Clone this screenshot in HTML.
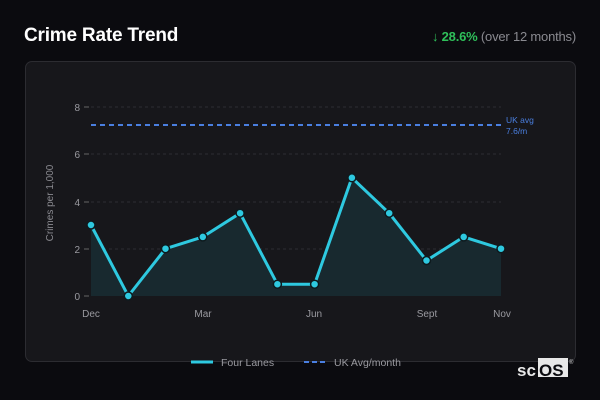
<!DOCTYPE html>
<html><head><meta charset="utf-8"><style>
html,body{margin:0;padding:0;background:#0b0b0f;width:600px;height:400px;overflow:hidden;font-family:"Liberation Sans","DejaVu Sans",sans-serif}
.t{position:absolute;left:24px;top:25px;color:#fff;font-weight:bold;font-size:19px;letter-spacing:-0.2px}
.s{position:absolute;right:24px;top:29px;font-size:13px;color:#8a8a90;letter-spacing:-0.2px}
.s b{color:#2fbf5a}
.card{position:absolute;left:25px;top:61px;width:549px;height:299px;background:#17171b;border:1px solid #2c2c31;border-radius:7px}
</style></head><body>
<div class="t">Crime Rate Trend</div>
<div class="s"><b>↓ 28.6%</b> (over 12 months)</div>
<div class="card"></div>
<svg width="600" height="400" style="position:absolute;left:0;top:0" font-family="Liberation Sans, sans-serif">
<g stroke="#2e2e33" stroke-dasharray="3,3" stroke-width="1">
<line x1="91" y1="107" x2="501" y2="107"/><line x1="91" y1="154" x2="501" y2="154"/><line x1="91" y1="202" x2="501" y2="202"/><line x1="91" y1="249" x2="501" y2="249"/>
</g>
<g stroke="#666" stroke-width="1"><line x1="84" y1="107" x2="89" y2="107"/><line x1="84" y1="154" x2="89" y2="154"/><line x1="84" y1="202" x2="89" y2="202"/><line x1="84" y1="249" x2="89" y2="249"/><line x1="84" y1="296" x2="89" y2="296"/></g>
<g fill="#9a9aa0" font-size="10" text-anchor="end"><text x="80" y="111">8</text><text x="80" y="158">6</text><text x="80" y="206">4</text><text x="80" y="253">2</text><text x="80" y="300">0</text></g>
<text transform="translate(53,203) rotate(-90)" fill="#8a8a90" font-size="10" text-anchor="middle">Crimes per 1,000</text>
<polygon fill="#18292f" points="91,296 91,225 128.3,296 165.5,248.7 202.8,236.9 240.1,213.2 277.4,284.2 314.6,284.2 351.9,177.8 389.2,213.2 426.5,260.5 463.7,236.9 501,248.7 501,296"/>
<line x1="91" y1="125" x2="501" y2="125" stroke="#4a7fe0" stroke-width="2" stroke-dasharray="5,4"/>
<text x="506" y="123" fill="#4a7fe0" font-size="8.5">UK avg</text><text x="506" y="134" fill="#4a7fe0" font-size="8.5">7.6/m</text>
<polyline fill="none" stroke="#2ec9e0" stroke-width="3" stroke-linejoin="round" points="91,225 128.3,296 165.5,248.7 202.8,236.9 240.1,213.2 277.4,284.2 314.6,284.2 351.9,177.8 389.2,213.2 426.5,260.5 463.7,236.9 501,248.7"/>
<g fill="#2ec9e0" stroke="#0e1a1e" stroke-width="1.5">
<circle cx="91" cy="225" r="4"/><circle cx="128.3" cy="296" r="4"/><circle cx="165.5" cy="248.7" r="4"/><circle cx="202.8" cy="236.9" r="4"/><circle cx="240.1" cy="213.2" r="4"/><circle cx="277.4" cy="284.2" r="4"/><circle cx="314.6" cy="284.2" r="4"/><circle cx="351.9" cy="177.8" r="4"/><circle cx="389.2" cy="213.2" r="4"/><circle cx="426.5" cy="260.5" r="4"/><circle cx="463.7" cy="236.9" r="4"/><circle cx="501" cy="248.7" r="4"/>
</g>
<g fill="#9a9aa0" font-size="10" text-anchor="middle"><text x="91" y="317">Dec</text><text x="203" y="317">Mar</text><text x="314" y="317">Jun</text><text x="427" y="317">Sept</text><text x="502" y="317">Nov</text></g>
<line x1="191" y1="362" x2="213" y2="362" stroke="#2ec9e0" stroke-width="3"/>
<text x="221" y="366" fill="#9a9aa0" font-size="10.5">Four Lanes</text>
<line x1="304" y1="362" x2="327" y2="362" stroke="#4a7fe0" stroke-width="2" stroke-dasharray="5,3"/>
<text x="334" y="366" fill="#9a9aa0" font-size="10.5">UK Avg/month</text>
<rect x="538" y="358" width="30" height="19" fill="#e8e8e8"/>
<text x="517" y="376" fill="#e8e8e8" font-size="17" font-weight="bold">sc</text>
<text x="539" y="376" fill="#0b0b0f" font-size="17" font-weight="bold">OS</text>
<text x="569" y="364" fill="#ccc" font-size="6">®</text>
</svg>
</body></html>
